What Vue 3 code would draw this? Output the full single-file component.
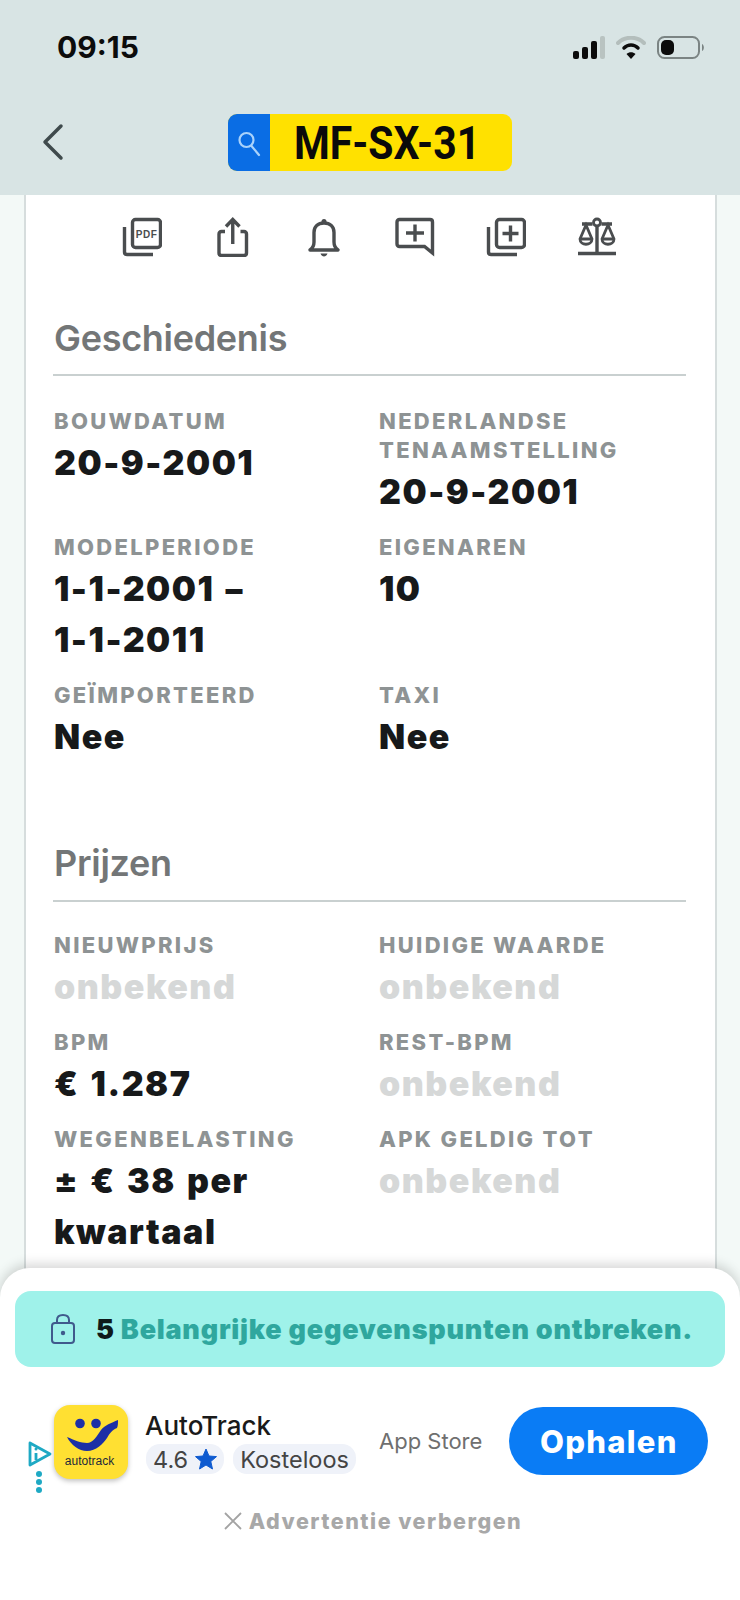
<script setup>
const history = [
  { label: "Bouwdatum", value: "20-9-2001" },
  { label: "Nederlandse tenaamstelling", value: "20-9-2001" },
  { label: "Modelperiode", value: "1-1-2001 –\n1-1-2011" },
  { label: "Eigenaren", value: "10" },
  { label: "Geïmporteerd", value: "Nee" },
  { label: "Taxi", value: "Nee" },
];

const prices = [
  { label: "Nieuwprijs", value: "onbekend", unknown: true },
  { label: "Huidige waarde", value: "onbekend", unknown: true },
  { label: "BPM", value: "€ 1.287" },
  { label: "Rest-BPM", value: "onbekend", unknown: true },
  { label: "Wegenbelasting", value: "± € 38 per kwartaal" },
  { label: "APK geldig tot", value: "onbekend", unknown: true },
];

const sections = [
  { title: "Geschiedenis", items: history },
  { title: "Prijzen", items: prices },
];
</script>

<template>
  <div class="page">
    <header class="header">
      <div class="status">
        <span class="time">09:15</span>
        <div class="status-icons">
          <svg width="32" height="23" viewBox="0 0 32 23">
            <rect x="0" y="15" width="6" height="8" rx="2" fill="#0c0c0c" />
            <rect x="9" y="11" width="6" height="12" rx="2" fill="#0c0c0c" />
            <rect x="18" y="5" width="6" height="18" rx="2" fill="#0c0c0c" />
            <rect x="27" y="0" width="5" height="23" rx="2" fill="#b9c3c1" />
          </svg>
          <svg width="30" height="23" viewBox="0 0 30 23" fill="none" stroke-linecap="round">
            <path d="M2 7C9 0 21 0 28 7" stroke="#b4bebc" stroke-width="4" />
            <path d="M8 12C12 8 18 8 22 12" stroke="#0c0c0c" stroke-width="3.500" />
            <path d="M15 23L10.500 18C13 15.500 17 15.500 19.500 18Z" fill="#0c0c0c" />
          </svg>
          <svg width="48" height="23" viewBox="0 0 48 23" fill="none">
            <rect x="1" y="1" width="41" height="21" rx="6.500" stroke="#7b8483" stroke-width="2" />
            <rect x="4" y="4" width="13" height="15" rx="5" fill="#0c0c0c" />
            <path d="M45 8C47.500 9 47.500 14 45 15Z" fill="#7b8483" />
          </svg>
        </div>
      </div>
      <div class="nav">
        <svg class="back" width="26" height="38" viewBox="0 0 26 38" fill="none">
          <path d="M21 3L5 19L21 35" stroke="#3f4a4c" stroke-width="3.500" stroke-linecap="round" stroke-linejoin="round" />
        </svg>
        <div class="plate">
          <div class="plate-search">
            <svg width="28" height="30" viewBox="0 0 28 30" fill="none" stroke="#a9d2fb" stroke-width="2.200">
              <circle cx="11.500" cy="12" r="7" />
              <path d="M16.500 18L24 27" stroke-linecap="round" />
            </svg>
          </div>
          <div class="plate-number"><span>MF-SX-31</span></div>
        </div>
      </div>
    </header>

    <main class="card">
      <div class="actions">
        <div class="action">
          <svg viewBox="0 0 40 40" fill="none" stroke="#4a4d4f" stroke-width="3.400">
            <rect x="10.500" y="2.500" width="28" height="28" rx="3" />
            <path d="M2.500 10V35C2.500 36.500 3.500 37.500 5 37.500H31" />
            <text x="24.500" y="20.500" text-anchor="middle" class="pdf-text">PDF</text>
          </svg>
        </div>
        <div class="action">
          <svg viewBox="0 0 40 40" fill="none" stroke="#4a4d4f" stroke-width="3.400">
            <path d="M12 14.500H8.500C7 14.500 6 15.500 6 17V36C6 37.500 7 38.500 8.500 38.500H31C32.500 38.500 33.500 37.500 33.500 36V17C33.500 15.500 32.500 14.500 31 14.500H27.500" />
            <path d="M19.750 27V3M13 9.500L19.750 2.500L26.500 9.500" />
          </svg>
        </div>
        <div class="action">
          <svg viewBox="0 0 40 40" fill="none" stroke="#4a4d4f" stroke-width="3.400">
            <path d="M6 33C9 31 10 29 10 25V15.500C10 9.500 14 6 20 6C26 6 30 9.500 30 15.500V25C30 29 31 31 34 33Z" stroke-linejoin="round" />
            <circle cx="20" cy="4.500" r="2.500" fill="#4a4d4f" stroke="none" />
            <path d="M16.500 36.500H23.500C23 38.500 21.500 39.500 20 39.500C18.500 39.500 17 38.500 16.500 36.500Z" fill="#4a4d4f" stroke="none" />
          </svg>
        </div>
        <div class="action">
          <svg viewBox="0 0 40 40" fill="none" stroke="#4a4d4f" stroke-width="3.400">
            <path d="M4.500 2.500H35C36.500 2.500 37.500 3.500 37.500 5V36L29.500 29.500H4.500C3 29.500 2 28.500 2 27V5C2 3.500 3 2.500 4.500 2.500Z" />
            <path d="M11 16H29M20 7.500V24.500" />
          </svg>
        </div>
        <div class="action">
          <svg viewBox="0 0 40 40" fill="none" stroke="#4a4d4f" stroke-width="3.400">
            <rect x="10.500" y="2.500" width="28" height="28" rx="3" />
            <path d="M2.500 10V35C2.500 36.500 3.500 37.500 5 37.500H31" />
            <path d="M16.500 16.500H32.500M24.500 8.500V24.500" />
          </svg>
        </div>
        <div class="action">
          <svg viewBox="0 0 40 40" fill="none" stroke="#4a4d4f" stroke-width="3.400">
            <path d="M1 36.500H39M20 9V36M5 7H15.500M24.500 7H35" />
            <circle cx="20" cy="5.500" r="3.500" stroke-width="2.800" />
            <path d="M9 8L3 22C3 29 15 29 15 22Z" stroke-width="2.800" />
            <path d="M31 8L25 22C25 29 37 29 37 22Z" stroke-width="2.800" />
            <path d="M3 22H15M25 22H37" stroke-width="2.800" />
          </svg>
        </div>
      </div>

      <section v-for="section in sections" :key="section.title" class="section">
        <h2 class="section-title">{{ section.title }}</h2>
        <div class="fields">
          <div v-for="item in section.items" :key="item.label" class="field">
            <div class="field-label">{{ item.label }}</div>
            <div class="field-value" :class="{ unknown: item.unknown }">{{ item.value }}</div>
          </div>
        </div>
      </section>
    </main>

    <aside class="sheet">
      <div class="banner">
        <svg width="26" height="32" viewBox="0 0 26 32" fill="none" stroke="#3f5a8c" stroke-width="2">
          <rect x="2" y="10" width="22" height="20" rx="3" />
          <path d="M7 10V7C7 3.500 9.500 2 13 2C16.500 2 19 3.500 19 7V10" />
          <circle cx="13" cy="20" r="2.200" fill="#3f5a8c" stroke="none" />
        </svg>
        <p class="banner-text"><b>5</b> Belangrijke gegevenspunten ontbreken.</p>
      </div>

      <div class="ad">
        <div class="ad-choices">
          <svg width="24" height="26" viewBox="0 0 24 26" fill="none" stroke="#1ea9c4" stroke-width="2.800">
            <path d="M2 2L22 13L2 24Z" stroke-linejoin="round" />
            <path d="M8 12V19" />
            <circle cx="8" cy="8" r="1.500" fill="#1ea9c4" stroke="none" />
          </svg>
          <div class="dots"><i></i><i></i><i></i></div>
        </div>
        <div class="app-icon">
          <svg width="74" height="74" viewBox="0 0 74 74">
            <circle cx="26" cy="18.500" r="4.800" fill="#1c2fa6" />
            <circle cx="42" cy="18.500" r="4.800" fill="#1c2fa6" />
            <path d="M13 32C20 35 27 38 33 38C39 38 43 31 47 25C51 20 57 18 64 15C64 18 64 21 63 23C58 25 56 28 53 33C49 39 42 46 33 46C25 46 17 40 13 32Z" fill="#1c2fa6" />
            <text x="35.500" y="60" text-anchor="middle" class="app-icon-name">autotrack</text>
          </svg>
        </div>
        <div class="app-info">
          <div class="app-name">AutoTrack</div>
          <div class="chips">
            <span class="chip">4.6
              <svg width="22" height="22" viewBox="0 0 22 22">
                <path d="M11 1L14 8L21.500 8.600L15.800 13.500L17.500 21L11 17L4.500 21L6.200 13.500L0.500 8.600L8 8Z" fill="#0f5bd0" stroke="#0f5bd0" stroke-linejoin="round" />
              </svg>
            </span>
            <span class="chip">Kosteloos</span>
          </div>
        </div>
        <span class="store">App Store</span>
        <button class="get">Ophalen</button>
      </div>

      <div class="hide-ad">
        <svg width="18" height="18" viewBox="0 0 18 18" fill="none" stroke="#a3a3a3" stroke-width="1.800">
          <path d="M1 1L17 17M17 1L1 17" />
        </svg>
        <span>Advertentie verbergen</span>
      </div>
    </aside>
  </div>
</template>

<style>
body {
  background: #f3f9f7;
}
</style>

<style scoped>
.page {
  position: relative;
  width: 740px;
  height: 1600px;
  overflow: hidden;
  background: #f3f9f7;
  font-family: Inter, "Liberation Sans", sans-serif;
}
.header {
  height: 195px;
  background: #d8e4e4;
  box-sizing: border-box;
  padding-top: 30px;
}
.status {
  height: 34px;
  display: flex;
  align-items: center;
  justify-content: space-between;
  padding: 0 35px 0 57px;
}
.time {
  font-size: 30px;
  font-weight: 700;
  color: #0c0c0c;
}
.status-icons {
  display: flex;
  align-items: center;
  gap: 11px;
}
.nav {
  position: relative;
  margin-top: 50px;
  display: flex;
  justify-content: center;
}
.back {
  position: absolute;
  left: 40px;
  top: 9px;
}
.plate {
  width: 284px;
  height: 57px;
  display: flex;
  border-radius: 9px;
  overflow: hidden;
  background: #ffe100;
}
.plate-search {
  width: 42px;
  background: #0a6de4;
  display: flex;
  align-items: center;
  justify-content: center;
}
.plate-number {
  flex: 1;
  font-family: Roboto, sans-serif;
  font-size: 47px;
  font-weight: 700;
  line-height: 57px;
  color: #0a0a0a;
  padding-left: 24px;
}
.plate-number span {
  display: inline-block;
  transform-origin: left center;
  transform: scaleX(0.87);
  white-space: nowrap;
}
.card {
  width: 693px;
  margin-left: 24px;
  box-sizing: border-box;
  height: 1405px;
  background: #fff;
  border-left: 2px solid #d6dddd;
  border-right: 2px solid #d6dddd;
  padding: 22px 29px 0 27px;
}
.actions {
  display: flex;
  justify-content: center;
  height: 40px;
  margin-bottom: 59px;
}
.action {
  width: 91px;
  display: flex;
  justify-content: center;
}
.action svg {
  width: 40px;
  height: 40px;
}
.pdf-text {
  font-family: "Liberation Sans", sans-serif;
  font-size: 10px;
  font-weight: 700;
  fill: #4a4d4f;
  stroke: none;
  letter-spacing: 0.5px;
}
.section {
  margin-bottom: 79px;
}
.section-title {
  margin: 0 0 29px;
  padding: 0 0 14px 1px;
  font-size: 36px;
  line-height: 44px;
  font-weight: 600;
  color: #737677;
  letter-spacing: -0.3px;
  border-bottom: 2px solid #c9d0d0;
}
.section + .section .section-title {
  margin-bottom: 27px;
  padding-bottom: 15px;
}
.fields {
  display: grid;
  grid-template-columns: 325px 1fr;
  row-gap: 14px;
  padding-left: 1px;
}
.field-label {
  padding-top: 2px;
  font-size: 22px;
  line-height: 29px;
  font-weight: 800;
  letter-spacing: 2.300px;
  text-transform: uppercase;
  color: #8e9394;
  margin-bottom: 1px;
}
.field-value {
  font-size: 34px;
  line-height: 51px;
  font-weight: 900;
  letter-spacing: 1.500px;
  word-spacing: 3px;
  color: #17191a;
  white-space: pre-line;
}
.field-value.unknown {
  color: #d6d8d8;
}
.sheet {
  position: absolute;
  left: 0;
  right: 0;
  bottom: 0;
  height: 332px;
  box-sizing: border-box;
  background: #fff;
  border-radius: 30px 30px 0 0;
  box-shadow: 0 -4px 12px rgba(0, 0, 0, 0.16);
  padding: 23px 15px 0;
}
.banner {
  height: 76px;
  border-radius: 16px;
  background: #9ff2ea;
  display: flex;
  align-items: center;
  padding-left: 35px;
  gap: 20px;
}
.banner-text {
  margin: 0;
  font-size: 27px;
  font-weight: 900;
  color: #2fa79e;
  letter-spacing: 0.75px;
  white-space: nowrap;
}
.banner-text b {
  color: #0f1a1a;
}
.ad {
  position: relative;
  display: flex;
  align-items: center;
  margin-top: 38px;
  padding-left: 39px;
  height: 74px;
}
.ad-choices {
  position: absolute;
  left: 13px;
  top: 36px;
}
.dots {
  display: flex;
  flex-direction: column;
  gap: 2px;
  margin: 0 0 0 8px;
}
.dots i {
  width: 6px;
  height: 6px;
  border-radius: 50%;
  background: #1ea9c4;
}
.app-icon {
  width: 74px;
  height: 74px;
  border-radius: 16px;
  background: #ffe032;
  box-shadow: 0 2px 5px rgba(0, 0, 0, 0.25);
}
.app-icon-name {
  font-family: "Liberation Sans", sans-serif;
  font-size: 12px;
  fill: #1d2a3a;
}
.app-info {
  margin-left: 18px;
  width: 233px;
}
.app-name {
  font-size: 26px;
  line-height: 32px;
  font-weight: 500;
  color: #1a1a1a;
  margin-left: -1px;
}
.chips {
  display: flex;
  gap: 9px;
  margin-top: 2px;
}
.chip {
  display: flex;
  align-items: center;
  gap: 7px;
  height: 30px;
  padding: 0 7px;
  border-radius: 14px;
  background: #eff2f9;
  font-size: 23.500px;
  color: #444;
  white-space: nowrap;
}
.store {
  font-size: 22px;
  color: #6f6f6f;
  white-space: nowrap;
  margin-top: -2px;
}
.get {
  margin-left: 27px;
  width: 199px;
  height: 68px;
  margin-top: -2px;
  border: 0;
  border-radius: 34px;
  background: #0a7cf5;
  color: #fff;
  font-family: Inter, sans-serif;
  font-size: 31px;
  font-weight: 800;
  letter-spacing: 1.300px;
}
.hide-ad {
  display: flex;
  align-items: center;
  justify-content: center;
  gap: 7px;
  margin-top: 29px;
  padding-left: 6px;
  font-size: 21.500px;
  font-weight: 800;
  letter-spacing: 1.500px;
  color: #a8a8a8;
}
</style>
